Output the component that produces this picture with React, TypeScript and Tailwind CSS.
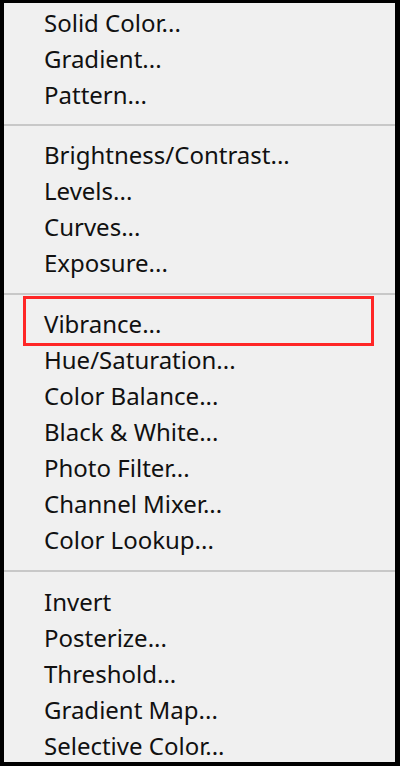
const groups = [
  ["Solid Color...", "Gradient...", "Pattern..."],
  ["Brightness/Contrast...", "Levels...", "Curves...", "Exposure..."],
  [
    "Vibrance...",
    "Hue/Saturation...",
    "Color Balance...",
    "Black & White...",
    "Photo Filter...",
    "Channel Mixer...",
    "Color Lookup...",
  ],
  ["Invert", "Posterize...", "Threshold...", "Gradient Map...", "Selective Color..."],
];

// separator block heights between groups
const sepHeights = ["", "h-[24px]", "h-[25px]", "h-[26px]"];

export default function App() {
  return (
    <div
      className="w-[400px] h-[766px] bg-[#f0f0f0] border-black border-t-[3px] border-l-4 border-r-[5px] border-b-4 overflow-hidden text-[#111111]"
      style={{ fontFamily: '"Noto Sans", "Liberation Sans", sans-serif' }}
    >
      <div className="flex flex-col pt-[2px]">
        {groups.map((items, gi) => (
          <div key={gi} className="flex flex-col">
            {gi > 0 && (
              <div className={`${sepHeights[gi]} flex items-center`}>
                <div className="w-full h-[2px] bg-[#c8c8c8]" />
              </div>
            )}
            {items.map((label) => (
              <div key={label} className="relative h-[36px] leading-[36px] pl-[40px] text-[24px] whitespace-nowrap">
                {label}
                {label === "Vibrance..." && (
                  <div className="absolute top-[-10px] bottom-[-4px] left-[19px] right-[21px] border-[3px] border-[#ff2626]" />
                )}
              </div>
            ))}
          </div>
        ))}
      </div>
    </div>
  );
}
